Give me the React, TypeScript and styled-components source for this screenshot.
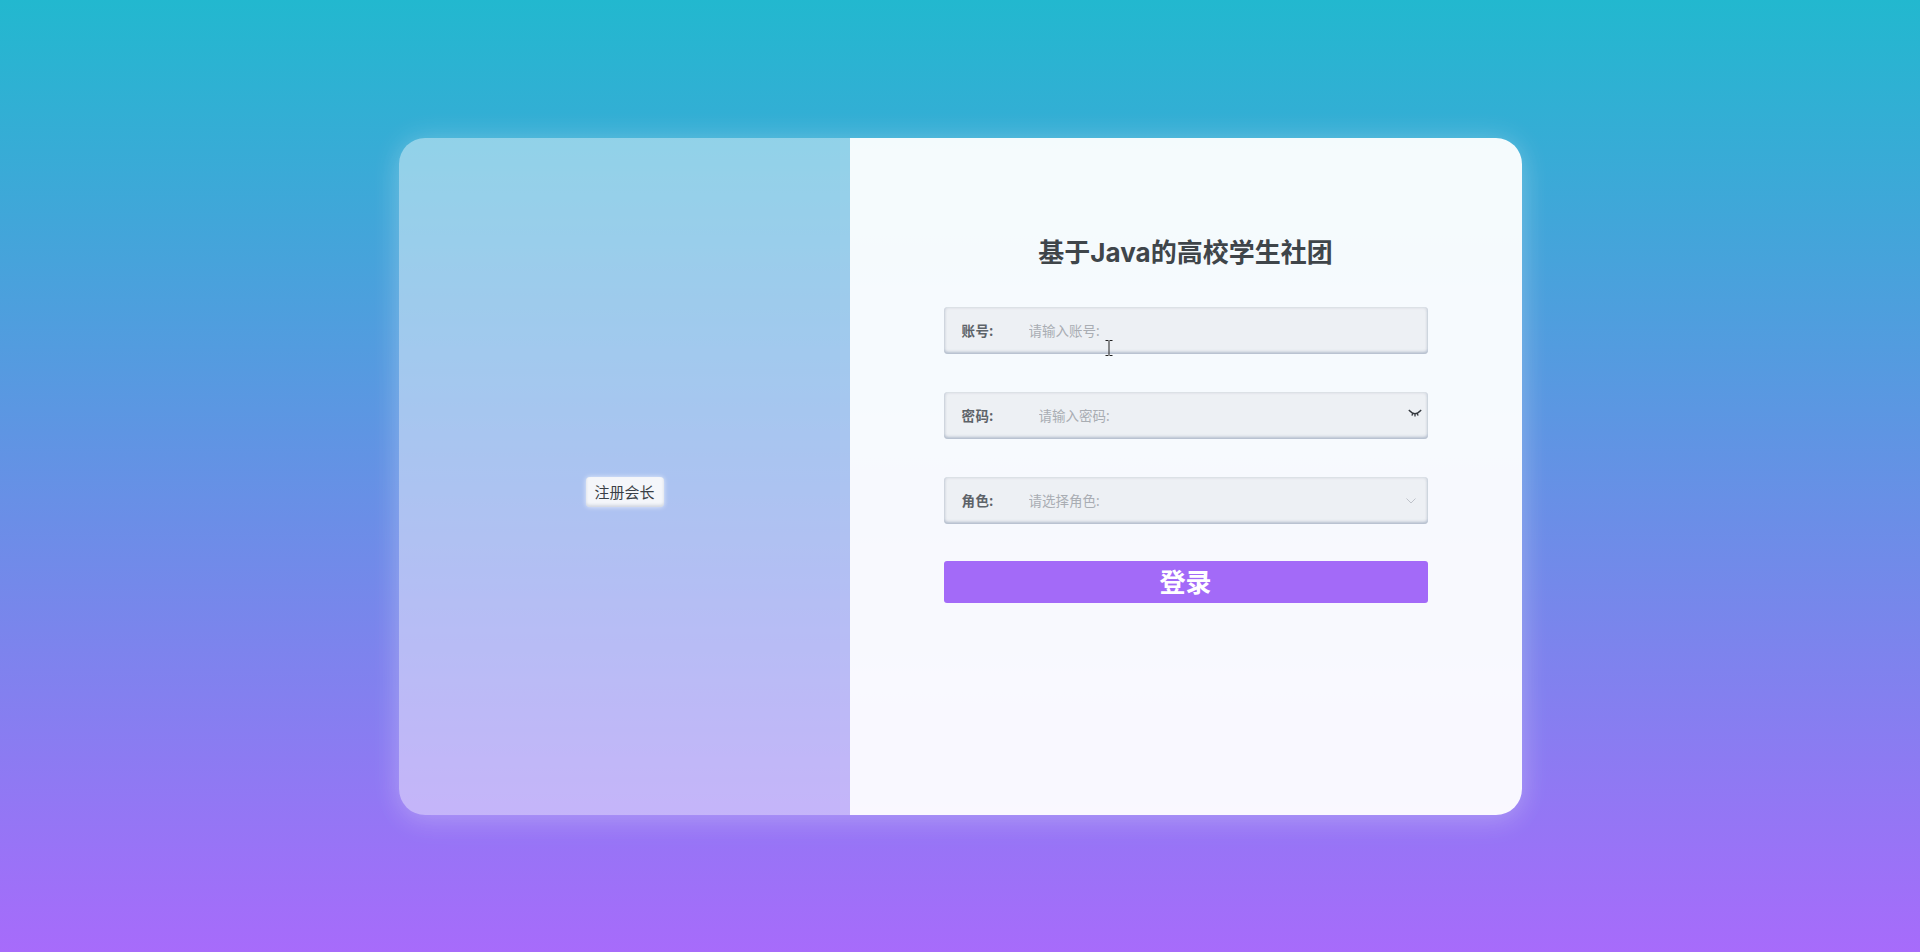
import React, { useState } from 'react';
import styled, { createGlobalStyle } from 'styled-components';

const GlobalStyle = createGlobalStyle`
  html, body {
    margin: 0;
    height: 100%;
  }
  body {
    font-family: "Noto Sans", "Noto Sans CJK SC", sans-serif;
  }
`;

const Page = styled.div`
  height: 952px;
  display: flex;
  align-items: center;
  justify-content: center;
  background: linear-gradient(180deg, #22b8cf 0%, #a76bfb 100%);
  overflow: hidden;
`;

const Card = styled.div`
  width: 1123px;
  height: 677px;
  margin-top: 1px;
  display: flex;
  border-radius: 26px;
  overflow: hidden;
  box-shadow: 0 0 28px rgba(255, 255, 255, 0.22), 0 10px 28px rgba(255, 255, 255, 0.1);
`;

const LeftPanel = styled.div`
  width: 451px;
  display: flex;
  align-items: center;
  justify-content: center;
  background: rgba(255, 255, 255, 0.46);
`;

const RegisterButton = styled.button`
  width: 78px;
  height: 30px;
  margin: 31px 0 0 1px;
  padding: 0;
  border: 0;
  border-radius: 4px;
  background: #f4f6fa;
  box-shadow: 0 0 5px rgba(255, 255, 255, 0.7), inset 0 -2px 3px rgba(170, 180, 195, 0.45);
  color: #3a3f46;
  font-family: inherit;
  font-size: 15px;
  line-height: 30px;
`;

const RightPanel = styled.div`
  flex: 1;
  display: flex;
  flex-direction: column;
  align-items: center;
  padding-top: 96px;
  background: rgba(255, 255, 255, 0.95);
`;

const Title = styled.h1`
  margin: 0 0 35px;
  font-family: Inter, "Noto Sans CJK SC", sans-serif;
  font-size: 26px;
  line-height: 38px;
  font-weight: 700;
  color: #3f454a;
`;

const Form = styled.form`
  width: 484px;
  display: flex;
  flex-direction: column;
  gap: 38px;
`;

const Field = styled.label`
  position: relative;
  height: 47px;
  display: flex;
  align-items: center;
  padding: 0 12px 0 18px;
  box-sizing: border-box;
  border-radius: 4px;
  background: #edf0f4;
  box-shadow: inset 0 -2px 3px rgba(170, 182, 200, 0.85), inset 0 1px 3px rgba(205, 212, 222, 0.4),
    inset 1px 0 3px rgba(205, 212, 222, 0.4), inset -1px 0 3px rgba(205, 212, 222, 0.4);
`;

const FieldLabel = styled.span`
  width: 67px;
  flex: none;
  padding-bottom: 2px;
  font-size: 13.5px;
  font-weight: 700;
  letter-spacing: 0.4px;
  color: #5d6369;
`;

const TextInput = styled.input<{ $indent?: number }>`
  flex: 1;
  min-width: 0;
  padding: 0 0 0 ${(p) => p.$indent || 0}px;
  border: 0;
  outline: none;
  background: transparent;
  font-family: inherit;
  font-size: 13.5px;
  color: #3b4146;
  &::placeholder {
    color: #a9adb3;
    opacity: 1;
  }
`;

const EyeIcon = styled.svg`
  position: absolute;
  right: 6px;
  top: 17px;
  width: 14px;
  height: 9px;
`;

const ChevronIcon = styled.svg`
  position: absolute;
  right: 12px;
  top: 21px;
  width: 10px;
  height: 6px;
`;

const TextCursor = styled.svg`
  position: absolute;
  left: 161px;
  top: 33px;
  width: 8px;
  height: 16px;
`;

const SubmitButton = styled.button`
  height: 42px;
  margin-top: -1px;
  padding: 0;
  border: 0;
  border-radius: 3px;
  background: #a36af8;
  color: #fff;
  font-family: inherit;
  font-size: 26px;
  font-weight: 700;
  line-height: 42px;
`;

export default function App() {
  const [account, setAccount] = useState('');
  const [password, setPassword] = useState('');

  return (
    <Page>
      <GlobalStyle />
      <Card>
        <LeftPanel>
          <RegisterButton type="button">注册会长</RegisterButton>
        </LeftPanel>
        <RightPanel>
          <Title>基于Java的高校学生社团</Title>
          <Form onSubmit={(e) => e.preventDefault()}>
            <Field>
              <FieldLabel>账号:</FieldLabel>
              <TextInput
                value={account}
                placeholder="请输入账号:"
                onChange={(e) => setAccount(e.target.value)}
              />
              <TextCursor viewBox="0 0 8 16">
                <path d="M0.5 0.5H3.5M4.5 0.5H7.5M4 1V15M0.5 15.5H3.5M4.5 15.5H7.5" stroke="#222" fill="none" />
              </TextCursor>
            </Field>
            <Field>
              <FieldLabel>密码:</FieldLabel>
              <TextInput
                type="password"
                value={password}
                $indent={10}
                placeholder="请输入密码:"
                onChange={(e) => setPassword(e.target.value)}
              />
              <EyeIcon viewBox="0 0 14 9">
                <path
                  d="M2 2C4.5 5.5 9.5 5.5 12 2M0.8 1L2.6 2.8M13.2 1L11.4 2.8M4.6 4.4L4 6.6M9.4 4.4L10 6.6M7 5V7.4"
                  stroke="#33373d"
                  strokeWidth="1.3"
                  fill="none"
                />
              </EyeIcon>
            </Field>
            <Field>
              <FieldLabel>角色:</FieldLabel>
              <TextInput readOnly placeholder="请选择角色:" />
              <ChevronIcon viewBox="0 0 10 6">
                <path d="M0.5 0.5L5 5L9.5 0.5" stroke="#bfc3ca" fill="none" />
              </ChevronIcon>
            </Field>
            <SubmitButton type="submit">登录</SubmitButton>
          </Form>
        </RightPanel>
      </Card>
    </Page>
  );
}
